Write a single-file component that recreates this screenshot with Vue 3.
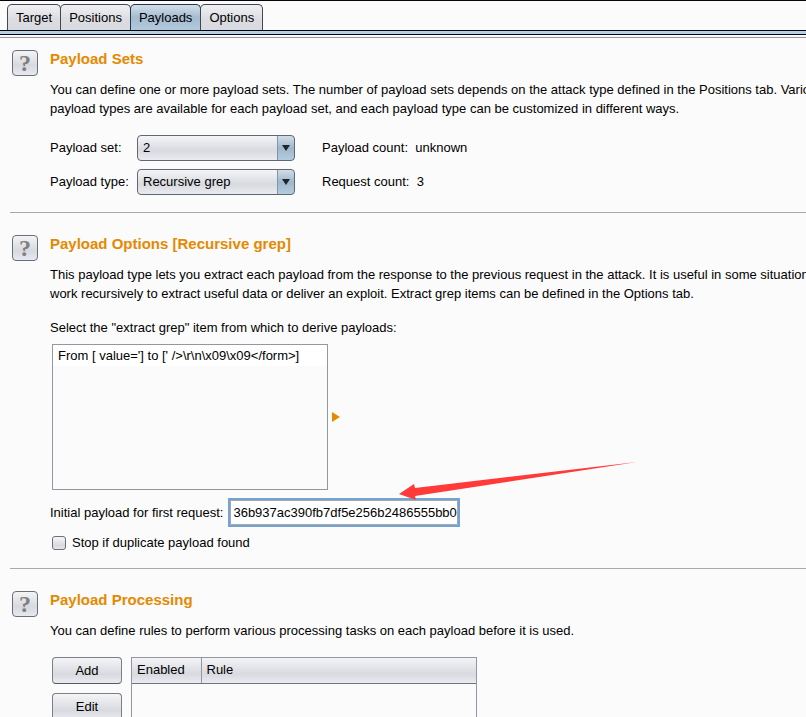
<template>
  <div class="app">
    <nav class="tabs" role="tablist">
      <button
        v-for="tab in tabs"
        :key="tab"
        type="button"
        role="tab"
        class="tab"
        :class="{ active: tab === activeTab }"
        :aria-selected="tab === activeTab"
        @click="activeTab = tab"
      >{{ tab }}</button>
    </nav>
    <div class="tab-strip"></div>

    <main class="panel">
      <section class="section first">
        <button type="button" class="help" aria-label="Help: Payload Sets">?</button>
        <div class="content">
          <h2>Payload Sets</h2>
          <p class="description">You can define one or more payload sets. The number of payload sets depends on the attack type defined in the Positions tab. Various<br>payload types are available for each payload set, and each payload type can be customized in different ways.</p>
          <div class="sets">
            <label for="payload-set">Payload set:</label>
            <span class="combo">
              <select id="payload-set" v-model="payloadSet">
                <option>1</option>
                <option>2</option>
              </select>
              <svg class="combo-arrow" viewBox="0 0 8 6" aria-hidden="true"><path d="M0 0h8L4 6z" /></svg>
            </span>
            <span class="count">Payload count:&nbsp; unknown</span>

            <label for="payload-type">Payload type:</label>
            <span class="combo">
              <select id="payload-type" v-model="payloadType">
                <option>Simple list</option>
                <option>Recursive grep</option>
              </select>
              <svg class="combo-arrow" viewBox="0 0 8 6" aria-hidden="true"><path d="M0 0h8L4 6z" /></svg>
            </span>
            <span class="count">Request count:&nbsp; 3</span>
          </div>
        </div>
      </section>

      <section class="section">
        <button type="button" class="help" aria-label="Help: Payload Options">?</button>
        <div class="content">
          <h2>Payload Options [Recursive grep]</h2>
          <p class="description">This payload type lets you extract each payload from the response to the previous request in the attack. It is useful in some situations<br>work recursively to extract useful data or deliver an exploit. Extract grep items can be defined in the Options tab.</p>
          <p class="list-label">Select the "extract grep" item from which to derive payloads:</p>
          <div class="list-row">
            <ul class="grep-list">
              <li v-for="item in grepItems" :key="item">{{ item }}</li>
            </ul>
            <svg class="marker" viewBox="0 0 8 10" aria-hidden="true"><path d="M0 0l8 5-8 5z" /></svg>
          </div>
          <div class="initial-row">
            <label for="initial-payload">Initial payload for first request:</label>
            <div class="field">
              <input id="initial-payload" v-model="initialPayload" type="text">
              <svg class="pointer" viewBox="0 0 240 40" aria-hidden="true">
                <path d="M0 32L15 22 16 26 238 0 16 34 17 38z" />
              </svg>
            </div>
          </div>
          <label class="check">
            <input v-model="stopOnDuplicate" type="checkbox">
            Stop if duplicate payload found
          </label>
        </div>
      </section>

      <section class="section">
        <button type="button" class="help" aria-label="Help: Payload Processing">?</button>
        <div class="content">
          <h2>Payload Processing</h2>
          <p class="description">You can define rules to perform various processing tasks on each payload before it is used.</p>
          <div class="rules">
            <div class="rule-buttons">
              <button type="button" class="btn">Add</button>
              <button type="button" class="btn">Edit</button>
            </div>
            <div class="rule-box">
              <table>
                <thead>
                  <tr>
                    <th class="enabled" scope="col">Enabled</th>
                    <th scope="col">Rule</th>
                  </tr>
                </thead>
              </table>
            </div>
          </div>
        </div>
      </section>
    </main>
  </div>
</template>

<script setup>
import { ref } from 'vue'

const tabs = ['Target', 'Positions', 'Payloads', 'Options']
const activeTab = ref('Payloads')

const payloadSet = ref('2')
const payloadType = ref('Recursive grep')
const grepItems = ref(["From [ value='] to [' />\\r\\n\\x09\\x09</form>]"])
const initialPayload = ref('36b937ac390fb7df5e256b2486555bb0')
const stopOnDuplicate = ref(false)
</script>

<style>
body {
  margin: 0;
  background: #fbfbfb;
}
</style>

<style scoped>
.app {
  box-sizing: border-box;
  height: 100vh;
  overflow: hidden;
  border-top: 1px solid #05050f;
  background: #fbfbfb;
  color: #000;
  font: 13px/19px "Liberation Sans", Arial, sans-serif;
}

.app * {
  box-sizing: border-box;
}

button,
input,
select {
  margin: 0;
  color: inherit;
  font: inherit;
}

.tabs {
  display: flex;
  padding: 3px 7px 0;
}

.tab {
  height: 26px;
  padding: 0 8px;
  border: 1px solid #45454d;
  border-bottom: 0;
  border-radius: 5px 5px 0 0;
  background: linear-gradient(#f1f1f4, #dcdde2 55%, #d9dadf);
}

.tab + .tab {
  margin-left: -1px;
}

.tab.active {
  border-color: #20364b;
  background: linear-gradient(#d3e0e9, #a4bbd0 50%, #b3cade);
}

.tab-strip {
  height: 5px;
  border-top: 1px solid #05050f;
  border-bottom: 1px solid #05050f;
  background: #b8cfe2;
}

.panel {
  margin-top: 2px;
  border-top: 1px solid #9297a1;
}

.section {
  display: flex;
  gap: 12px;
  margin-left: 10px;
  padding: 22px 0 17px 2px;
  white-space: nowrap;
}

.section.first {
  padding-top: 12px;
}

.section + .section {
  border-top: 1px solid #a3a8b2;
}

.help {
  flex: none;
  width: 26px;
  height: 26px;
  padding: 0;
  border: 1px solid #6c6f78;
  border-radius: 4px;
  background: linear-gradient(#f4f4f6, #d6d9df 60%, #e6e9ef);
  color: #808080;
  font: bold 24px/25px "Liberation Serif", serif;
}

.content {
  flex: 1;
  min-width: 0;
}

h2 {
  margin: 0 0 13px;
  color: #e58900;
  font-size: 15px;
  font-weight: bold;
  line-height: 17px;
}

p {
  margin: 0;
}

.sets {
  display: grid;
  grid-template-columns: 87px 158px auto;
  gap: 8px 0;
  align-items: center;
  margin-top: 17px;
}

.combo {
  position: relative;
  display: block;
  height: 26px;
}

.combo select {
  width: 100%;
  height: 26px;
  padding: 0 20px 1px 5px;
  border: 1px solid #5f6774;
  border-radius: 4px;
  background:
    linear-gradient(90deg, #7e96ac 1px, transparent 1px) right / 17px 100% no-repeat,
    linear-gradient(#d0dde7, #9fb7cb 50%, #b5cce0) right / 17px 100% no-repeat,
    linear-gradient(#f5f5f7, #d8dae0 60%, #e9ebf1);
  appearance: none;
}

.combo-arrow {
  position: absolute;
  top: 10px;
  right: 5px;
  width: 8px;
  height: 6px;
  fill: #1d252d;
  pointer-events: none;
}

.sets label,
.count {
  padding-bottom: 2px;
}

.count {
  padding-left: 27px;
}

.list-label {
  margin-top: 15px;
}

.list-row {
  display: flex;
  gap: 4px;
  align-items: center;
  margin: 7px 0 8px 2px;
}

.grep-list {
  width: 276px;
  height: 146px;
  margin: 0;
  padding: 0;
  border: 1px solid #9297a1;
  list-style: none;
}

.grep-list li {
  height: 21px;
  padding: 1px 5px;
  background: #fff;
}

.marker {
  width: 8px;
  height: 10px;
  fill: #e58900;
}

.initial-row {
  display: flex;
  gap: 5px;
  align-items: center;
}

.field {
  position: relative;
}

.field input {
  display: block;
  width: 232px;
  height: 29px;
  padding: 0 0 0 3px;
  border: 2px solid #73a4d1;
  outline: 0;
  background: #fff;
  box-shadow: inset 0 0 0 1px #a7a9ad;
}

.pointer {
  position: absolute;
  top: -36px;
  left: 171px;
  width: 240px;
  height: 40px;
  fill: #ff3a38;
  pointer-events: none;
}

.check {
  display: flex;
  gap: 6px;
  align-items: center;
  width: max-content;
  margin: 6px 0 -1px 2px;
}

.check input {
  width: 14px;
  height: 14px;
  border: 1px solid #6c6f78;
  border-radius: 3px;
  background: linear-gradient(#f6f6f8, #d8dae0 70%, #e7e9ef);
  appearance: none;
}

.check input:checked {
  background: #5f8fb8;
}

.rules {
  display: flex;
  gap: 9px;
  margin: 17px 0 0 2px;
}

.rule-buttons {
  display: flex;
  flex-direction: column;
  gap: 9px;
}

.btn {
  width: 70px;
  height: 27px;
  padding: 0;
  border: 1px solid #7b7f88;
  border-bottom-color: #555962;
  border-radius: 4px;
  background: linear-gradient(#f5f5f7, #d8dae0 65%, #e9ebf1);
}

.rule-box {
  width: 346px;
  min-height: 146px;
  border: 1px solid #9297a1;
}

table {
  width: 100%;
  border-collapse: collapse;
  table-layout: fixed;
}

th {
  height: 25px;
  padding: 0 5px 2px;
  border-bottom: 1px solid #70747d;
  background: linear-gradient(#f3f3f5, #d8dae0 65%, #e9ebf1);
  font-weight: normal;
  text-align: left;
}

.enabled {
  width: 69px;
  border-right: 1px solid #9297a1;
}
</style>
